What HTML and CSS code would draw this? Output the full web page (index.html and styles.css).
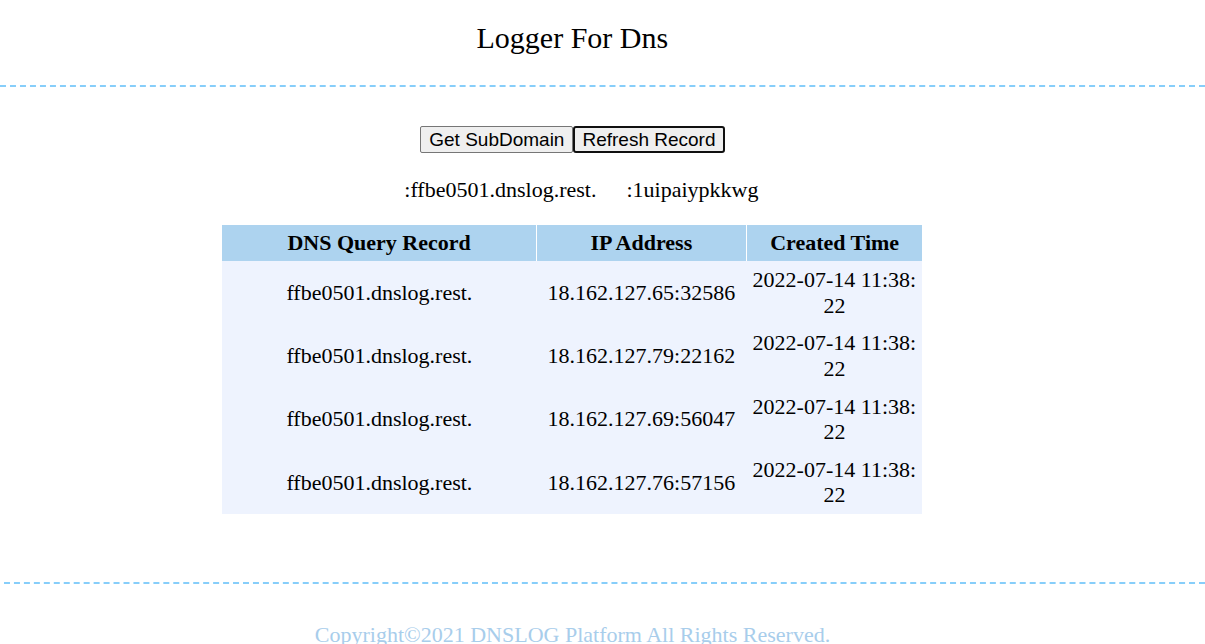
FILE: index.html
```html
<!DOCTYPE html>
<html>
<head>
<meta charset="utf-8">
<title>Logger For Dns</title>
<link rel="stylesheet" href="styles.css">
</head>
<body>
<div class="header">
  <div class="wrap">
    <div class="title">Logger For Dns</div>
  </div>
</div>
<div class="main">
  <div class="wrap">
    <div class="actions"><button class="btn">Get SubDomain</button><button class="btn btn-focus">Refresh Record</button></div>
    <div class="info"><span>:ffbe0501.dnslog.rest.</span><span>:1uipaiypkkwg</span></div>
    <table class="records">
      <colgroup>
        <col class="c1"><col class="c2"><col class="c3">
      </colgroup>
      <thead>
        <tr><th>DNS Query Record</th><th>IP Address</th><th>Created Time</th></tr>
      </thead>
      <tbody>
        <tr><td>ffbe0501.dnslog.rest.</td><td>18.162.127.65:32586</td><td>2022-07-14 11:38:22</td></tr>
        <tr><td>ffbe0501.dnslog.rest.</td><td>18.162.127.79:22162</td><td>2022-07-14 11:38:22</td></tr>
        <tr><td>ffbe0501.dnslog.rest.</td><td>18.162.127.69:56047</td><td>2022-07-14 11:38:22</td></tr>
        <tr><td>ffbe0501.dnslog.rest.</td><td>18.162.127.76:57156</td><td>2022-07-14 11:38:22</td></tr>
      </tbody>
    </table>
  </div>
</div>
<div class="footer">
  <div class="wrap">
    <div class="copy">Copyright©2021 DNSLOG Platform All Rights Reserved.</div>
  </div>
</div>
</body>
</html>
```
FILE: styles.css
```css
html, body {
  margin: 0;
  padding: 0;
  background: #fff;
}
body {
  font-family: "Liberation Serif", "Times New Roman", serif;
  font-size: 22px;
  color: #000;
}
.wrap {
  width: 95%;
  text-align: center;
}
.header {
  padding-top: 21px;
  padding-bottom: 30px;
  border-bottom: 2px dashed #87cefa;
}
.title {
  font-size: 30px;
  line-height: 34px;
}
.main {
  padding-top: 39px;
  padding-bottom: 68px;
}
.actions {
  display: flex;
  justify-content: center;
}
.btn {
  font-family: "Liberation Sans", Arial, sans-serif;
  font-size: 19px;
  margin: 0;
  padding: 1px 8px;
  height: 27px;
  line-height: 21px;
  background: #efefef;
  border: 1px solid #767676;
  border-radius: 2px;
  color: #000;
}
.btn-focus {
  border: 2px solid #101010;
  border-radius: 3px;
  padding: 0 7px;
}
.info {
  display: flex;
  justify-content: center;
  gap: 30px;
  padding-left: 18px;
  margin-top: 24px;
  line-height: 25px;
}
.records {
  margin: 23px auto 0;
  width: 700px;
  table-layout: fixed;
  border-collapse: collapse;
}
.c1 { width: 314px; }
.c2 { width: 210px; }
.c3 { width: 176px; }
.records th {
  background: #add3ef;
  font-weight: bold;
  padding: 5px 5px;
  height: 26px;
  border-right: 1px solid #fff;
  line-height: 26px;
}
.records th:last-child {
  border-right: none;
}
.records td {
  background: #eef3fe;
  padding: 6px 5px;
  line-height: 25.5px;
  height: 51.25px;
  word-break: break-all;
}
.footer {
  margin-left: 4px;
  border-top: 2px dashed #87cefa;
  padding-top: 38px;
}
.copy {
  color: #a8cdeb;
  margin-left: -4px;
}
```
